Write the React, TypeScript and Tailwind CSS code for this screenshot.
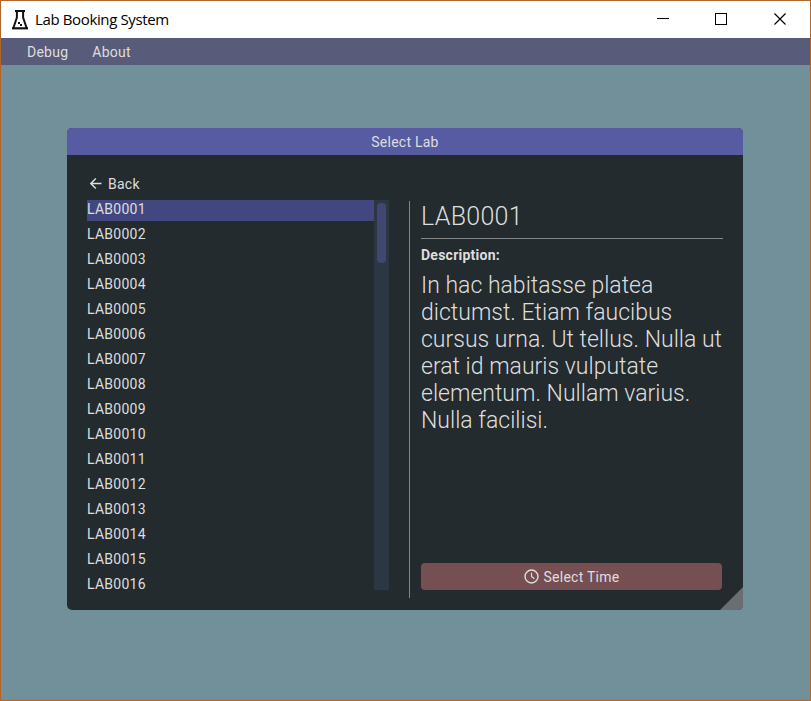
import React from "react";

const labs = Array.from({ length: 16 }, (_, i) => "LAB" + String(i + 1).padStart(4, "0"));

function Flask() {
  return (
    <svg width="18" height="22" viewBox="0 0 18 22" className="ml-[10px] shrink-0" fill="none" stroke="#111">
      <path d="M4 2h10" strokeWidth="2" />
      <path d="M5.900 2v6.500L2.200 19.500M12.100 2v6.500L15.800 19.500" strokeWidth="2" />
      <path d="M1 19.300h16" strokeWidth="2.200" />
      <path d="M7 14h2M9 16h2" strokeWidth="1.800" />
    </svg>
  );
}

function TitleBar() {
  return (
    <header className="flex h-[37px] shrink-0 items-center bg-white text-black">
      <Flask />
      <h1 className="ml-[6px] flex-1 font-['Open_Sans',sans-serif] text-[15px] tracking-[-0.37px]">Lab Booking System</h1>
      <svg width="160" height="37" viewBox="0 0 160 37" fill="none" stroke="#000" className="shrink-0">
        <path d="M7 17.500h12" shapeRendering="crispEdges" />
        <rect x="65.500" y="12.500" width="11" height="11" shapeRendering="crispEdges" />
        <path d="M124.500 12.500l11 11M135.500 12.500l-11 11" strokeWidth="1.150" />
      </svg>
    </header>
  );
}

export default function App() {
  return (
    <div className="flex h-[701px] w-[811px] flex-col overflow-hidden border border-[#b0662b] bg-[#719099] font-['Roboto',sans-serif] text-[14px] tracking-[0.25px] text-[#dededf]">
      <TitleBar />
      <nav className="flex h-[27px] shrink-0 items-center gap-6 bg-[#585b79] pl-[26px] pt-[2px]">
        <span>Debug</span>
        <span>About</span>
      </nav>
      <main className="ml-[66px] mt-[63px] flex h-[482px] w-[676px] flex-col overflow-hidden rounded-[5px] bg-[#232b2e]">
        <h2 className="flex h-[27px] shrink-0 items-center justify-center bg-[#575ba1] pt-[2px]">Select Lab</h2>
        <div className="flex min-h-0 flex-1">
          <section className="ml-5 w-[302px] pt-[18px]">
            <button className="flex h-[22px] items-center gap-[6px] pl-[3px]">
              <svg width="12" height="12" viewBox="0 0 12 12" fill="none" stroke="currentColor" strokeWidth="1.400">
                <path d="M11.500 5.500H.8M5.800 .5L.8 5.500 5.800 10.500" />
              </svg>
              Back
            </button>
            <div className="mt-[5px] flex h-[390px]">
              <ul className="w-[287px]">
                {labs.map((lab, i) => (
                  <li key={lab} className={i === 0 ? "mb-1 h-[21px] bg-[#43477f] leading-[18px]" : "mb-1 h-[21px] leading-[18px]"}>{lab}</li>
                ))}
              </ul>
              <div className="w-[15px] bg-[#2b3742] px-[3px] pt-[3px]">
                <div className="h-[60px] rounded-[4px] bg-[#414770]" />
              </div>
            </div>
          </section>
          <section className="ml-5 mt-[46px] flex h-[397px] w-[314px] flex-col border-l border-[#828687] pl-[11px]">
            <h3 className="h-[38px] border-b border-[#828687] pt-px text-[25px] font-light leading-[30px] tracking-[0.3px]">LAB0001</h3>
            <h4 className="mt-[7px] text-[14px] font-bold leading-[18px]">Description:</h4>
            <p className="mt-[8px] whitespace-nowrap text-[23px] font-light leading-[27px] tracking-[0.01px]">
              In hac habitasse platea<br />dictumst. Etiam faucibus<br />cursus urna. Ut tellus. Nulla ut<br />erat id mauris vulputate<br />elementum. Nullam varius.<br />Nulla facilisi.
            </p>
            <button className="mb-2 mt-auto flex h-[27px] w-[301px] items-center justify-center gap-[5px] rounded-[4px] bg-[#764f53]">
              <svg width="15" height="15" viewBox="0 0 15 15" fill="none" stroke="currentColor" strokeWidth="1.400">
                <circle cx="7.500" cy="7.500" r="6.500" />
                <path d="M7.500 3.800V7.500l2.800 2.300" strokeWidth="1.200" />
              </svg>
              <span className="pt-[2px]">Select Time</span>
            </button>
          </section>
          <svg width="23" height="23" viewBox="0 0 23 23" className="ml-[-3px] mt-auto shrink-0">
            <path d="M23 0V23H0Z" fill="#6a6e70" />
          </svg>
        </div>
      </main>
    </div>
  );
}
